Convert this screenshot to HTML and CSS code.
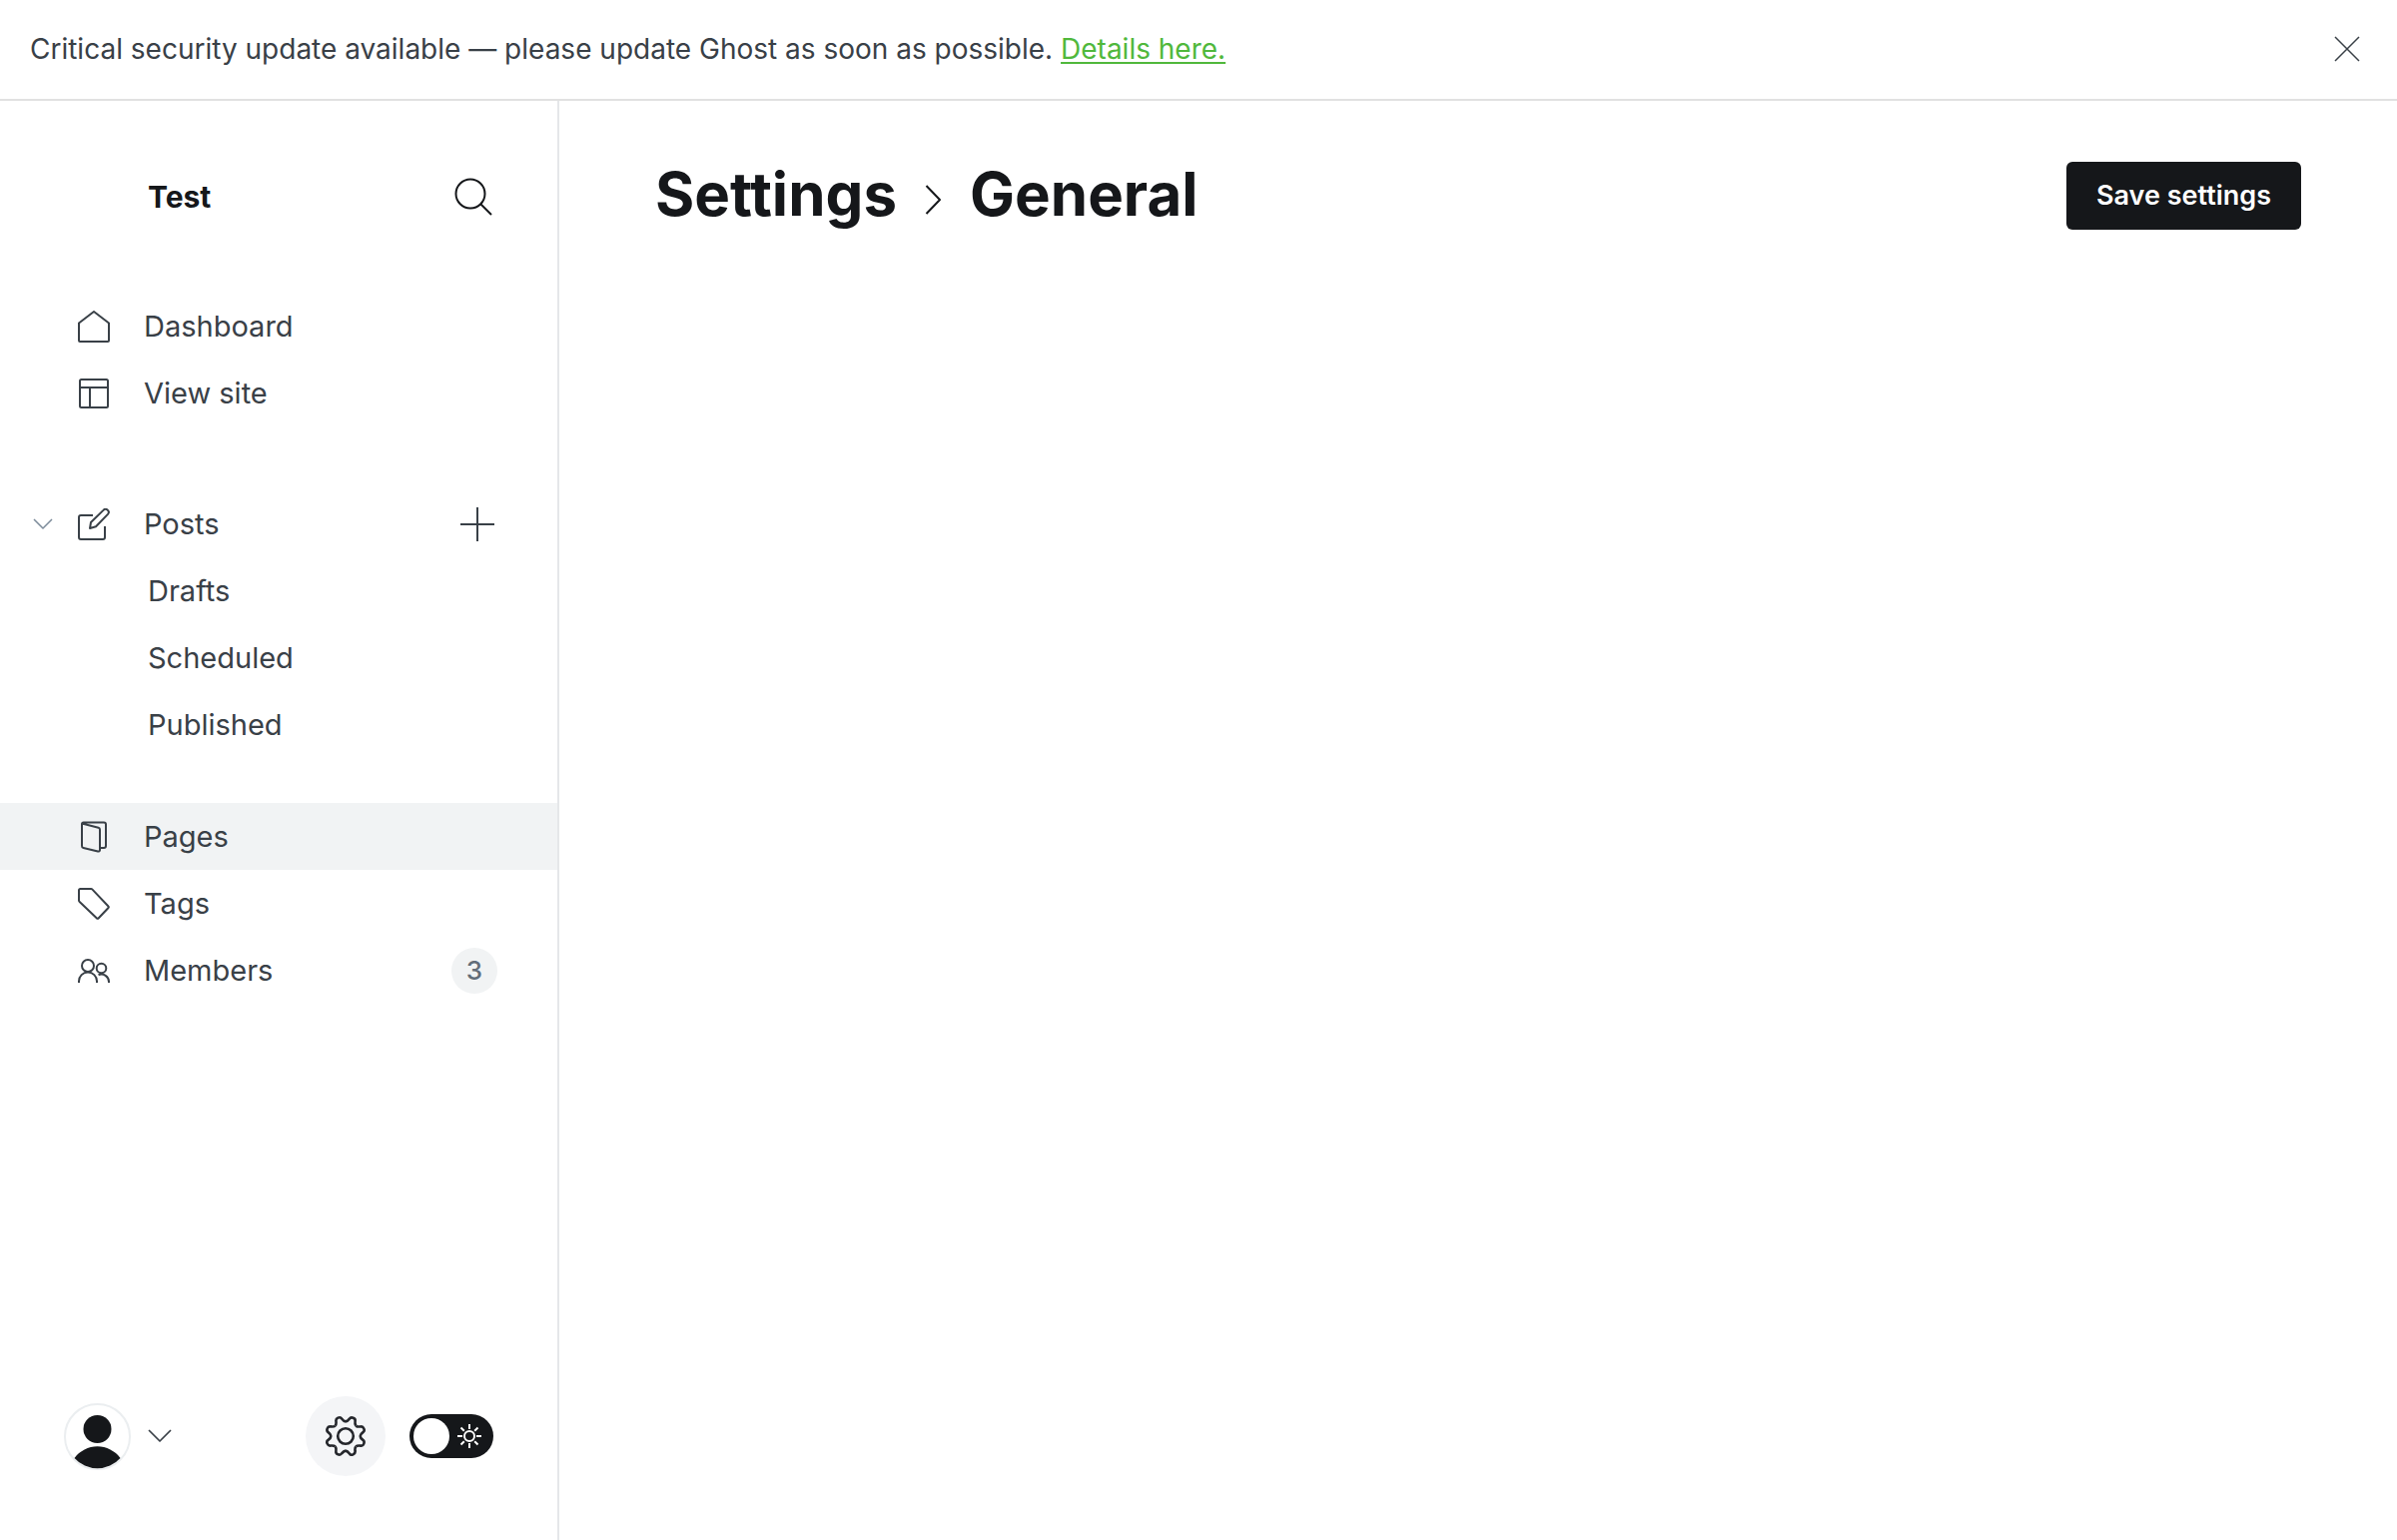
FILE: index.html
```html
<!DOCTYPE html>
<html lang="en">
<head>
<meta charset="utf-8">
<meta name="viewport" content="width=device-width, initial-scale=1">
<title>Settings - General - Test</title>
<link rel="stylesheet" href="styles.css">
</head>
<body>
<div class="app">
  <aside class="banner">
    <p class="banner-text">Critical security update available — please update Ghost as soon as possible. <a href="#details">Details here.</a></p>
    <button class="icon-button" type="button" aria-label="Close">
      <svg class="icon" width="26" height="26" viewBox="0 0 26 26"><path stroke-width="1.500" d="M1 1l24 24M25 1L1 25"/></svg>
    </button>
  </aside>
  <div class="body">
    <nav class="sidebar" aria-label="Main">
      <header class="site">
        <span class="site-name">Test</span>
        <button class="icon-button" type="button" aria-label="Search">
          <svg class="icon" width="38" height="38" viewBox="0 0 38 38"><circle cx="16" cy="16" r="14.5"/><path d="M26.500 26.500L37 37"/></svg>
        </button>
      </header>
      <ul class="menu">
        <li class="row"><a class="link" href="#dashboard">
          <svg class="icon" width="32" height="32" viewBox="0 0 32 32"><path d="M1 12.500L16 1l15 11.500V30a1 1 0 0 1-1 1H2a1 1 0 0 1-1-1z"/></svg>
          Dashboard</a></li>
        <li class="row"><a class="link" href="#site">
          <svg class="icon" width="32" height="32" viewBox="0 0 32 32"><rect x="2" y="2" width="28" height="28" rx="1.500"/><path d="M2 10h28M12 10v20"/></svg>
          View site</a></li>
      </ul>
      <ul class="menu posts">
        <li class="row">
          <button class="icon-button expand" type="button" aria-label="Collapse posts">
            <svg class="icon" width="20" height="12" viewBox="0 0 20 12"><path stroke-width="1.500" d="M1 1l9 9 9-9"/></svg>
          </button>
          <a class="link" href="#posts">
          <svg class="icon" width="32" height="32" viewBox="0 0 32 32"><path d="M15 7H3a2 2 0 0 0-2 2v20a2 2 0 0 0 2 2h22a2 2 0 0 0 2-2V18"/><path d="M12 20l1-6L25.500 1.900a2.900 2.900 0 0 1 4.500 4L18 18.200z"/></svg>
          Posts</a>
          <a class="add" href="#new" aria-label="New post">
            <svg class="icon" width="36" height="36" viewBox="0 0 36 36"><path d="M18 1v34M1 18h34"/></svg>
          </a>
        </li>
        <li class="row"><a class="link sub" href="#drafts">Drafts</a></li>
        <li class="row"><a class="link sub" href="#scheduled">Scheduled</a></li>
        <li class="row"><a class="link sub" href="#published">Published</a></li>
      </ul>
      <ul class="menu">
        <li class="row active"><a class="link" href="#pages">
          <svg class="icon" width="32" height="32" viewBox="0 0 32 32"><path d="M4 2.500L20.500 6.700A2 2 0 0 1 22 8.700V29a1.500 1.500 0 0 1-2 1.500L5.500 27A2 2 0 0 1 4 25V3a1.500 1.500 0 0 1 1.500-1.500H26A2 2 0 0 1 28 3.500V25a2 2 0 0 1-2 2h-4"/></svg>
          Pages</a></li>
        <li class="row"><a class="link" href="#tags">
          <svg class="icon" width="32" height="32" viewBox="0 0 32 32"><path d="M2.500 1H13a2 2 0 0 1 1.500.600L30.500 18.500a1 1 0 0 1 0 1.500L20.500 30.500a1 1 0 0 1-1.500 0L1.700 14A2 2 0 0 1 1 12.500v-10A1.500 1.500 0 0 1 2.500 1z"/></svg>
          Tags</a></li>
        <li class="row"><a class="link" href="#members">
          <svg class="icon" width="32" height="32" viewBox="0 0 32 32"><circle cx="10" cy="11" r="6"/><circle cx="23.500" cy="13.500" r="4.800"/><path d="M1 28v-1.500a9 9 0 0 1 18 0V28M20.500 20.200a7.500 7.500 0 0 1 10.500 7V28"/></svg>
          Members</a>
          <span class="count">3</span></li>
      </ul>
      <footer class="tools">
        <button class="icon-button account" type="button" aria-label="Account">
          <svg width="67" height="67" viewBox="0 0 67 67"><circle cx="33.500" cy="33.500" r="32.500" fill="#fff" stroke="#ebeef0" stroke-width="2"/><circle cx="33.500" cy="26" r="14" fill="#15171a"/><path d="M10.500 55a28.500 28.500 0 0 1 46 0a31 31 0 0 1-46 0z" fill="#15171a"/></svg>
          <svg class="icon" width="24" height="14" viewBox="0 0 24 14"><path stroke-width="1.700" d="M1 1l11 11L23 1"/></svg>
        </button>
        <a class="gear" href="#settings" aria-label="Settings">
          <svg class="icon" width="42" height="42" viewBox="-21 -21 42 42">
            <g stroke-width="2.600">
              <circle r="7.800"/>
              <path id="tooth" d="M14.600 0C14.740 1.290 15.780 2.640 17.400 3.900C19.800 5.500 18.200 10.300 15.100 9.600C13.100 9.300 11.340 9.510 10.320 10.320"/>
              <use href="#tooth" transform="rotate(45)"/>
              <use href="#tooth" transform="rotate(90)"/>
              <use href="#tooth" transform="rotate(135)"/>
              <use href="#tooth" transform="rotate(180)"/>
              <use href="#tooth" transform="rotate(225)"/>
              <use href="#tooth" transform="rotate(270)"/>
              <use href="#tooth" transform="rotate(315)"/>
            </g>
          </svg>
        </a>
        <label class="toggle">
          <input type="checkbox" aria-label="Night mode">
          <svg class="sun" width="24" height="24" viewBox="-12 -12 24 24"><circle r="5"/><path d="M0-12v5M0 7v5M-12 0h5M7 0h5M-8.500-8.500l3.300 3.300M5.200 5.200l3.300 3.300M-8.500 8.500l3.300-3.300M5.200-5.200l3.300-3.300"/></svg>
        </label>
      </footer>
    </nav>
    <main class="main">
      <header class="page-header">
        <h1 class="title"><a href="#settings">Settings</a>
          <svg class="icon" width="17" height="30" viewBox="0 0 17 30"><path d="M1.500 1L15 15 1.500 29"/></svg>
          General</h1>
        <button class="save" type="button">Save settings</button>
      </header>
    </main>
  </div>
</div>
</body>
</html>
```
FILE: styles.css
```css
* { box-sizing: border-box; }

body {
  margin: 0;
  background: #fff;
  color: #394047;
  font: 28px/32px Inter, "Liberation Sans", sans-serif;
}

a { color: inherit; text-decoration: none; }
button { font: inherit; border: 0; cursor: pointer; }

.icon {
  flex: none;
  fill: none;
  stroke: currentColor;
  stroke-width: 2;
  stroke-linejoin: round;
}

.icon-button {
  display: flex;
  align-items: center;
  padding: 0;
  background: none;
  color: inherit;
}

.app {
  display: flex;
  flex-direction: column;
  min-height: 100vh;
}

.banner {
  display: flex;
  align-items: center;
  justify-content: space-between;
  padding: 33px 37px 34px 30px;
  border-bottom: 2px solid #e1e1e1;
}

.banner-text { margin: 0; }
.banner-text a { color: #50b83c; text-decoration: underline; text-underline-offset: 3px; }

.body { display: flex; flex: 1; }

.sidebar {
  display: flex;
  flex-direction: column;
  flex: none;
  width: 560px;
  border-right: 2px solid #e5e7e9;
}

.site {
  display: flex;
  align-items: center;
  justify-content: space-between;
  padding: 77px 65px 77px 148px;
  color: #15171a;
}

.site-name { font-size: 30px; font-weight: 700; }

.menu {
  margin: 0 0 64px;
  padding: 0;
  list-style: none;
  font-size: 29px;
}

.menu.posts { margin-bottom: 45px; }

.row {
  position: relative;
  display: flex;
  align-items: center;
  height: 67px;
  padding-right: 60px;
}

.row.active { background: #f1f3f4; }

.link {
  display: flex;
  flex: 1;
  align-items: center;
  gap: 34px;
  padding-left: 78px;
}

.link.sub { padding-left: 148px; }
.expand { position: absolute; left: 33px; color: #7c8b9a; }
.add { display: flex; padding-right: 2px; }

.count {
  width: 46px;
  border-radius: 23px;
  background: #f1f3f4;
  color: #626d79;
  font-size: 26px;
  font-weight: 500;
  line-height: 46px;
  text-align: center;
}

.tools {
  display: flex;
  align-items: center;
  margin-top: auto;
  padding: 0 64px 64px;
}

.account { gap: 17px; margin-right: auto; }

.gear {
  display: flex;
  align-items: center;
  justify-content: center;
  width: 80px;
  height: 80px;
  margin-right: 24px;
  border-radius: 50%;
  background: #f4f5f7;
  color: #24262b;
}

.toggle {
  display: flex;
  align-items: center;
  justify-content: space-between;
  width: 84px;
  height: 44px;
  padding: 0 12px 0 4px;
  border-radius: 22px;
  background: #15171a;
}

.toggle input {
  appearance: none;
  width: 36px;
  height: 36px;
  margin: 0;
  border-radius: 50%;
  background: #fff;
}

.sun { fill: none; stroke: #fff; stroke-width: 2; }

.main { flex: 1; padding: 61px 96px; }

.page-header {
  display: flex;
  align-items: center;
  justify-content: space-between;
}

.title {
  display: flex;
  align-items: center;
  gap: 28px;
  margin: 0;
  padding-bottom: 4px;
  color: #15171a;
  font-size: 60px;
  font-weight: 700;
  line-height: 64px;
}

.title .icon { margin-top: 12px; }

.save {
  padding: 18px 30px;
  border-radius: 6px;
  background: #15171a;
  color: #fff;
  font-size: 27px;
  font-weight: 600;
}
```
